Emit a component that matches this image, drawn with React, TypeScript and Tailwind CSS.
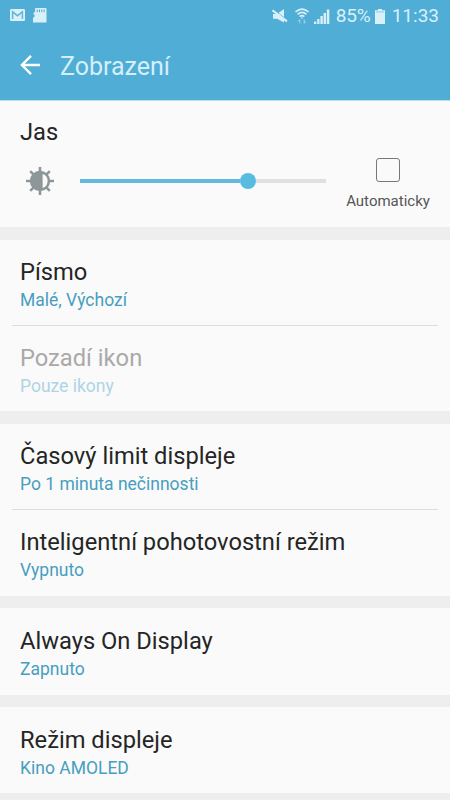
type Item = { title: string; value: string; disabled?: boolean };

const groups: Item[][] = [
    [
        { title: "Písmo", value: "Malé, Výchozí" },
        { title: "Pozadí ikon", value: "Pouze ikony", disabled: true },
    ],
    [
        { title: "Časový limit displeje", value: "Po 1 minuta nečinnosti" },
        { title: "Inteligentní pohotovostní režim", value: "Vypnuto" },
    ],
    [{ title: "Always On Display", value: "Zapnuto" }],
    [{ title: "Režim displeje", value: "Kino AMOLED" }],
];

const groupPadding = ["mb-px", "pb-px", "pt-px pb-px", "pt-px"];

function StatusBar() {
    return (
        <div className="flex h-8 items-center justify-between pl-2.5 pr-[11px] text-[#d8f0fa]">
            <div className="flex items-center gap-2 -mt-0.5">
                <svg width="15" height="12" viewBox="0 0 15 12">
                    <rect width="15" height="12" rx="1.2" fill="currentColor" />
                    <path d="M2.6 10V2.8L7.5 6.7L12.4 2.8V10" fill="none" stroke="#6ab4d3" strokeWidth="1.5" />
                </svg>
                <svg width="14" height="15" viewBox="0 0 14 15">
                    <path d="M3 0H12.5Q13.5 0 13.5 1V14.5H0V10L1.5 8.5V6.5H0.5V5L2 3.5V1Q2 0 3 0Z" fill="currentColor" />
                    <path d="M4.2 1.5V4.2M6.5 1.5V4.2M8.8 1.5V4.2M11.1 1.5V4.2" stroke="#52a9cd" strokeWidth="1" />
                </svg>
            </div>
            <div className="flex items-center">
                <svg width="16" height="16" viewBox="0 0 16 16" className="mr-[7px]">
                    <path d="M1 6H5L12 1V14.5L5 10.8H1Z" fill="currentColor" />
                    <path d="M2.2 2.2L15.2 12" stroke="#50add5" strokeWidth="1" />
                    <path d="M0.5 2.4L15 13.4" stroke="currentColor" strokeWidth="2" />
                </svg>
                <svg width="14" height="16" viewBox="0 0 14 16" className="mr-[5px]" fill="none" stroke="currentColor" strokeWidth="1.6">
                    <path d="M0.5 4Q7 -1.6 13.5 4M2.6 6.4Q7 2.5 11.4 6.4M4.7 8.6Q7 6.6 9.3 8.6" />
                    <circle cx="7" cy="10" r="0.8" fill="currentColor" stroke="none" />
                    <path d="M4.8 15.5V11.8M3.2 13.3L4.8 11.6M9.2 11.5V15.2M10.8 13.7L9.2 15.4" strokeWidth="1" opacity="0.6" />
                </svg>
                <svg width="16" height="15" viewBox="0 0 16 15" className="mr-1.5" fill="currentColor">
                    <path d="M0 12.5H2.3V15H0ZM3.2 10H5.5V15H3.2ZM6.4 7H8.8V15H6.4ZM9.6 4H12V15H9.6ZM12.8 0.5H15.3V15H12.8Z" />
                </svg>
                <span className="w-[35px] whitespace-nowrap text-[19px] leading-8 tracking-[-0.1px]">85%</span>
                <svg width="10" height="15" viewBox="0 0 10 15" className="ml-1 mr-[7px]" fill="currentColor">
                    <path d="M3 0H7V1.2H10V15H0V1.2H3Z" />
                    <path d="M1 2.2H9V3.6H1Z" fill="#50add5" opacity="0.4" />
                </svg>
                <span className="whitespace-nowrap text-[19px] leading-8">11:33</span>
            </div>
        </div>
    );
}

function Header() {
    return (
        <div className="flex h-[68px] items-center pl-5">
            <svg width="21" height="20" viewBox="0 0 21 20" fill="none" stroke="#fff" strokeWidth="2.4" className="-mt-0.5">
                <path d="M20 10H2M11 0.9L1.9 10L11 19.1" />
            </svg>
            <h1 className="ml-[19px] mt-0.5 text-[25px] leading-8 text-[#d5effa]">Zobrazení</h1>
        </div>
    );
}

function Brightness() {
    return (
        <section className="h-[126px] bg-[#fafafa] pl-5 pr-5 pt-[15px]">
            <h2 className="text-[23.7px] leading-8 text-[#252525]">Jas</h2>
            <div className="flex items-start">
                <svg width="28" height="28" viewBox="0 0 28 28" className="ml-1.5 mt-[19px]">
                    <g stroke="#8d9698" strokeWidth="2.6">
                        <path d="M14 0V28M0 14H28M4.2 4.2L23.8 23.8M23.8 4.2L4.2 23.8" />
                    </g>
                    <circle cx="14" cy="14" r="10.2" fill="#8d9698" />
                    <path d="M16.6 7A7.4 7.4 0 0 1 16.6 21Z" fill="#fafafa" />
                </svg>
                <div className="ml-[26px] mt-[25px] flex h-4 w-[246px] items-center">
                    <div className="h-1 w-[160px] bg-[#61b9df]" />
                    <div className="size-4 rounded-full bg-[#58bbe0]" />
                    <div className="h-1 flex-1 bg-[#e0e0e0]" />
                </div>
                <div className="ml-5 mt-2.5 flex w-[84px] flex-col items-center">
                    <div className="size-6 rounded-[3px] border border-[#777]" />
                    <span className="mt-[9px] text-[15px] leading-5 text-[#555]">Automaticky</span>
                </div>
            </div>
        </section>
    );
}

function Row({ title, value, disabled }: Item) {
    return (
        <div className="h-[85px] px-5 pt-4">
            <div className={`whitespace-nowrap text-[23.7px] leading-8 ${disabled ? "text-[#a9a9a9]" : "text-[#252525]"}`}>{title}</div>
            <div className={`mt-px text-[17.5px] leading-[23px] ${disabled ? "text-[#aed5e5]" : "text-[#489ebe]"}`}>{value}</div>
        </div>
    );
}

export default function App() {
    return (
        <div className="h-[800px] w-[450px] overflow-hidden bg-[#eeeeee] font-['Roboto',sans-serif]">
            <header className="border-b border-[#b9dfee] bg-[#50add5]">
                <StatusBar />
                <Header />
            </header>
            <Brightness />
            <main className="mt-[13px] flex flex-col gap-3">
                {groups.map((items, i) => (
                    <section key={i} className={`bg-[#fafafa] ${groupPadding[i]}`}>
                        {items.map((item, j) => (
                            <div key={item.title}>
                                {j > 0 && <div className="mx-3 h-px bg-[#dedede]" />}
                                <Row {...item} />
                            </div>
                        ))}
                    </section>
                ))}
            </main>
        </div>
    );
}
